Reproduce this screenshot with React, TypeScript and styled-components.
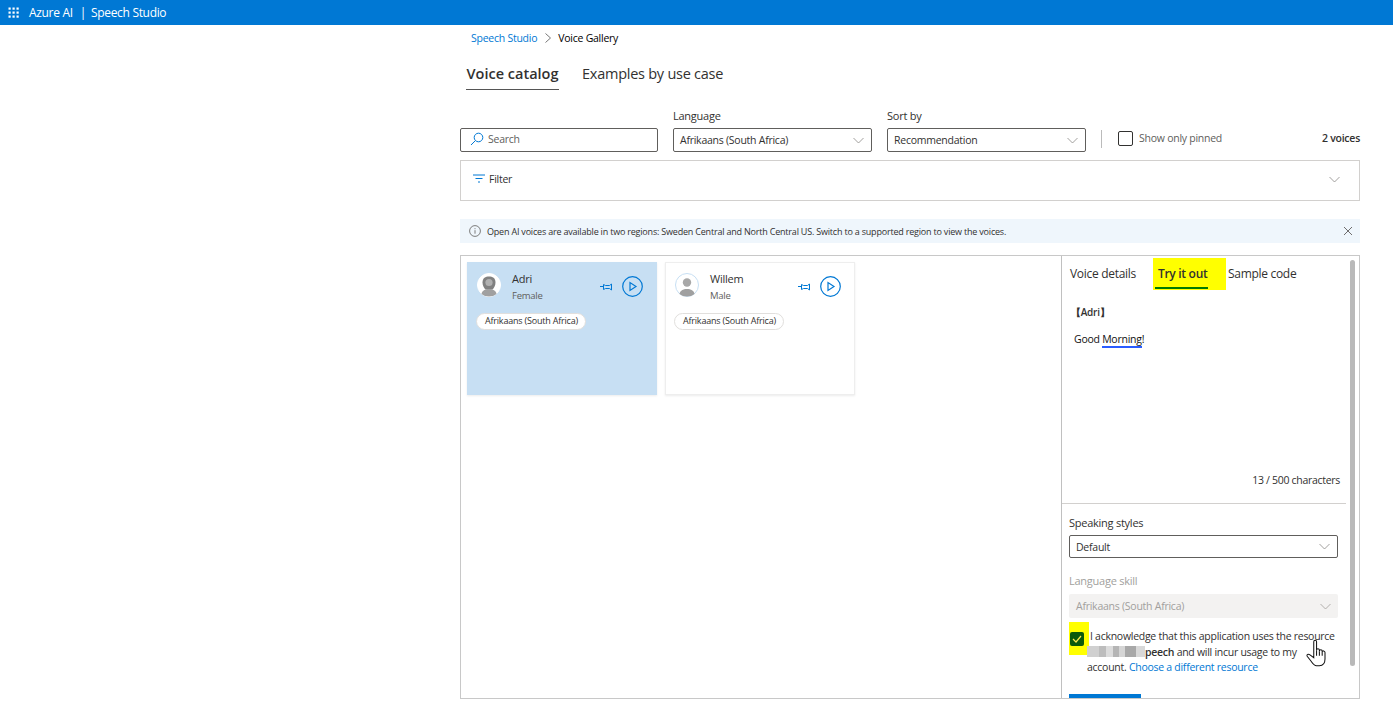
import React from "react";
import styled, { createGlobalStyle } from "styled-components";

const Global = createGlobalStyle`
  html, body { margin: 0; padding: 0; background: #fff; height: 705px; overflow: hidden; }
  body { font-family: "Open Sans", "Noto Sans", "Liberation Sans", sans-serif; color: #323130; font-size: 11px; letter-spacing: -0.25px; }
  * { box-sizing: border-box; }
`;

const TopBar = styled.header`
  height: 25px; background: #0078d4; color: #fff; display: flex; align-items: center; padding-left: 8px;
  font-size: 12px; letter-spacing: -0.32px;
`;
const Waffle = styled.svg`width: 12px; height: 12px; margin-right: 9px; fill: #fff;`;
const BarSep = styled.span`margin: 0 5px 0 7px;`;

const Page = styled.main`width: 900px; margin-left: 460px; display: flex; flex-direction: column;`;

const Crumbs = styled.nav`height: 26px; display: flex; align-items: center; padding-left: 11px; font-size: 10.5px; color: #000;`;
const CrumbLink = styled.span`color: #0078d4;`;
const CrumbArrow = styled.svg`width: 8px; height: 10px; margin: 0 6px 0 7px; stroke: #777; fill: none;`;

const MainTabs = styled.div`display: flex; height: 39px; margin-left: 6px; gap: 23px; font-size: 14.5px; letter-spacing: 0;`;
const MainTab = styled.div<{ $on?: boolean }>`
  height: 39px; line-height: 45px; width: ${p => (p.$on ? "93px" : "auto")};
  font-weight: ${p => (p.$on ? 600 : 400)}; text-align: center; letter-spacing: ${p => (p.$on ? "0" : "-0.25px")};
  color: #323130; border-bottom: ${p => (p.$on ? "1px solid #555" : "none")};
`;

const Controls = styled.div`display: flex; align-items: flex-end; margin-top: 19px; height: 43px;`;
const Field = styled.div<{ $w: number; $ml?: number }>`width: ${p => p.$w}px; margin-left: ${p => p.$ml ?? 0}px; display: flex; flex-direction: column;`;
const Label = styled.div<{ $off?: boolean }>`font-size: 11px; font-weight: 500; height: 19px; color: ${p => (p.$off ? "#a19f9d" : "#323130")}; line-height: 13px;`;
const Box = styled.div<{ $off?: boolean }>`
  height: 24px; border: ${p => (p.$off ? "none" : "1px solid #605e5c")}; border-radius: 2px; display: flex; align-items: center;
  padding: 0 7px 0 ${p => (p.$off ? 7 : 6)}px; font-size: 10.5px; background: ${p => (p.$off ? "#f3f2f1" : "#fff")}; color: ${p => (p.$off ? "#a19f9d" : "#323130")};
  justify-content: space-between;
`;
const SearchBox = styled(Box)`justify-content: flex-start; gap: 4px; padding-left: 9px; padding-bottom: 2px; color: #605e5c;`;
const Vline = styled.div`width: 1px; height: 18px; background: #bbb; margin: 0 16px 4px 15px;`;
const Pinned = styled.div`display: flex; align-items: center; gap: 6px; height: 24px; margin-bottom: 2px; font-size: 10.5px; color: #605e5c; flex: 1;`;
const CheckEmpty = styled.div`width: 15px; height: 15px; border: 1px solid #323130; border-radius: 2px;`;
const Count = styled.div`height: 24px; line-height: 21px; font-size: 10.5px; font-weight: 600; color: #323130;`;

const FilterBox = styled.div`
  margin-top: 8px; height: 41px; border: 1px solid #d2d0ce; display: flex; align-items: center; justify-content: space-between;
  padding: 0 19px 3px 12px; font-size: 10.5px; color: #323130;
`;
const FilterLabel = styled.div`display: flex; align-items: center; gap: 3px;`;

const Notice = styled.div`
  margin-top: 18px; height: 24px; background: #eff6fc; display: flex; align-items: center; padding: 0 7px 0 9px; font-size: 9px; color: #323130; letter-spacing: -0.2px;
`;
const NoticeText = styled.span`flex: 1; margin-left: 6px;`;

const Panel = styled.section`
  margin-top: 12px; height: 444px; border: 1px solid #c8c8c8; display: flex; overflow: hidden;
`;
const CardArea = styled.div`width: 600px; padding: 6px 6px; display: flex; gap: 8px; align-items: flex-start;`;
const Card = styled.article<{ $on?: boolean }>`
  width: 190px; height: 133px; padding: 10px 13px 10px 9px; background: ${p => (p.$on ? "#c7dff3" : "#fff")};
  border: 1px solid ${p => (p.$on ? "#c7dff3" : "#eeeeee")}; box-shadow: 0 1px 2px rgba(0,0,0,.08);
  display: flex; flex-direction: column;
`;
const CardTop = styled.div`display: flex; align-items: flex-start;`;
const Avatar = styled.svg`width: 24px; height: 24px; flex: none;`;
const Who = styled.div`margin-left: 11px; flex: 1; margin-top: -2px;`;
const Name = styled.div`font-size: 11px; font-weight: 500; line-height: 15px; color: #323130;`;
const Sub = styled.div`font-size: 9.5px; line-height: 14px; margin-top: 3px; color: #605e5c;`;
const PinIcon = styled.svg`width: 12px; height: 9px; margin-top: 9px; stroke: #0078d4; fill: none;`;
const PlayIcon = styled.svg`width: 21px; height: 21px; margin-left: 10px; margin-top: 3px; stroke: #0078d4; fill: none;`;
const Chip = styled.div`
  align-self: flex-start; margin-top: 10px; margin-left: -1px; height: 17px; padding: 0 7px 0 8px; border-radius: 9px; background: #fff;
  border: 1px solid #e1dfdd; line-height: 14px; font-size: 9px; letter-spacing: -0.2px; color: #323130;
`;

const Side = styled.aside`flex: 1; border-left: 1px solid #c0c0c0; position: relative; display: flex; flex-direction: column; overflow: hidden;`;
const Scroll = styled.div`position: absolute; left: 288px; top: 4px; width: 5px; height: 406px; background: #b9b9b9; border-radius: 3px;`;
const SideTabs = styled.div`display: flex; flex: none; height: 35px; padding-left: 8px; font-size: 12px; letter-spacing: -0.3px;`;
const SideTab = styled.div<{ $on?: boolean; $w: number; $pl: number }>`
  width: ${p => p.$w}px; padding: 8px 0 0 ${p => p.$pl}px; margin-top: 2px; line-height: 16px; height: 32px;
  background: ${p => (p.$on ? "#ffff00" : "transparent")}; font-weight: ${p => (p.$on ? 600 : 400)};
  color: #323130; position: relative;
`;
const TabLine = styled.div`position: absolute; left: 2px; top: 29px; width: 53px; height: 2px; background: #007a00;`;
const Editor = styled.div`flex: none; height: 213px; padding: 13px 0 0 12px; position: relative; border-bottom: 1px solid #d2d0ce; margin-right: 13px;`;
const Speaker = styled.div`font-size: 10px; font-weight: 600; line-height: 16px; color: #323130; margin-left: -3px;`;
const Phrase = styled.div`font-size: 10.5px; line-height: 16px; margin-top: 11px; color: #111;`;
const Wavy = styled.span`border-bottom: 2px solid #2b5cff;`;
const Chars = styled.div`position: absolute; right: 6px; bottom: 16px; font-size: 10.5px; letter-spacing: -0.3px; color: #323130;`;
const Form = styled.div`flex: none; padding: 11px 21px 0 7px; display: flex; flex-direction: column;`;
const FormLabel = styled(Label)`height: 20px; line-height: 15px;`;
const FormBox = styled(Box)`height: 23px; margin-bottom: 15px;`;
const FormBoxOff = styled(FormBox)`height: 24px; margin-top: 1px; margin-bottom: 4px;`;
const Ack = styled.div`display: flex; align-items: flex-start; position: relative; height: 68px;`;
const Mark = styled.div`width: 20px; height: 33px; background: #ffff00; display: flex; align-items: center; justify-content: flex-start; padding-left: 1px; flex: none;`;
const MarkBox = styled.div`width: 14px; height: 14px; background: #0b5a0b; border-radius: 2px; display: flex; align-items: center; justify-content: center;`;
const AckText = styled.div`font-size: 10.5px; line-height: 15.5px; color: #323130; margin-left: -2px; padding-top: 7px; letter-spacing: -0.27px; white-space: nowrap;`;
const Indent = styled.span`padding-left: 3px;`;
const Blurred = styled.span`
  display: inline-block; width: 58px; height: 11px; vertical-align: -1px;
  background: linear-gradient(90deg,#d0d0d0 0 20%,#bdbdbd 20% 33%,#dcdcdc 33% 45%,#b5b5b5 45% 55%,#d5d5d5 55% 65%,#a8a8a8 65% 85%,#d8d8d8 85%);
`;
const Bold = styled.b`font-weight: 600;`;
const Link = styled.span`color: #0078d4;`;
const Hand = styled.svg`position: absolute; left: 236px; top: 16px; width: 25px; height: 30px;`;
const Gen = styled.div`width: 72px; height: 24px; background: #0078d4; margin-top: 4px;`;

const Chevron = ({ c = "#8a8886" }: { c?: string }) => (
  <svg width="11" height="7" viewBox="0 0 11 7" fill="none" stroke={c} strokeWidth="0.8"><path d="M.5 1l5 5 5-5" /></svg>
);

const Person = ({ f }: { f?: boolean }) => (
  <Avatar viewBox="0 0 24 24">
    <circle cx="12" cy="12" r="11.500" fill="#fff" stroke={f ? "#fff" : "#c7dff3"} />
    {f && <path d="M5.500 9.500C5.500 5 8.500 3.500 12 3.500s6.500 1.500 6.500 6c0 3-1.500 5.500-3 7H8.500c-1.500-1.500-3-4-3-7z" fill="#808080" />}
    <circle cx="12" cy="9.500" r={f ? 3.600 : 4.200} fill={f ? "#b0b0b0" : "#a8a8a8"} />
    <path d="M4.500 21c.5-3.500 3.500-5 7.500-5s7 1.500 7.500 5c-2 1.700-4.700 2.500-7.500 2.500S6.500 22.700 4.500 21z" fill="#a0a0a0" />
  </Avatar>
);

const Pin = () => (
  <PinIcon viewBox="0 0 12 9"><path d="M0 4.500h3.500M3.500 2.500l2 1h4l2-1.500v6l-2-1.500h-4l-2 1z" strokeWidth="1" /></PinIcon>
);
const Play = () => (
  <PlayIcon viewBox="0 0 21 21"><circle cx="10.500" cy="10.500" r="9.800" strokeWidth="1.200" /><path d="M8 6.500v8l6-4z" strokeWidth="1.200" /></PlayIcon>
);

const VoiceCard = ({ name, sub, on }: { name: string; sub: string; on?: boolean }) => (
  <Card $on={on}>
    <CardTop>
      <Person f={on} />
      <Who><Name>{name}</Name><Sub>{sub}</Sub></Who>
      <Pin />
      <Play />
    </CardTop>
    <Chip>Afrikaans (South Africa)</Chip>
  </Card>
);

export default function App() {
  return (
    <>
      <Global />
      <TopBar>
        <Waffle viewBox="0 0 12 12">
          {[1, 5, 9].flatMap(y => [1, 5, 9].map(x => <rect key={`${x}-${y}`} x={x - 0.5} y={y - 0.5} width="2.200" height="2.200" />))}
        </Waffle>
        Azure AI<BarSep>|</BarSep>Speech Studio
      </TopBar>
      <Page>
        <Crumbs>
          <CrumbLink>Speech Studio</CrumbLink>
          <CrumbArrow viewBox="0 0 8 10"><path d="M1.500.5l5 4.500-5 4.500" /></CrumbArrow>
          Voice Gallery
        </Crumbs>
        <MainTabs>
          <MainTab $on>Voice catalog</MainTab>
          <MainTab>Examples by use case</MainTab>
        </MainTabs>
        <Controls>
          <Field $w={198}>
            <SearchBox>
              <svg width="14" height="14" viewBox="0 0 14 14" fill="none" stroke="#0078d4" strokeWidth="1"><circle cx="8.500" cy="5.500" r="4.300" /><path d="M5.300 8.700L1 13" /></svg>
              Search
            </SearchBox>
          </Field>
          <Field $w={199} $ml={15}>
            <Label>Language</Label>
            <Box>Afrikaans (South Africa)<Chevron /></Box>
          </Field>
          <Field $w={199} $ml={15}>
            <Label>Sort by</Label>
            <Box>Recommendation<Chevron /></Box>
          </Field>
          <Vline />
          <Pinned><CheckEmpty />Show only pinned</Pinned>
          <Count>2 voices</Count>
        </Controls>
        <FilterBox>
          <FilterLabel>
            <svg width="13" height="10" viewBox="0 0 13 10" fill="none" stroke="#0078d4" strokeWidth="1"><path d="M0 1h12M2.500 4.500h7M5 8h2" /></svg>
            Filter
          </FilterLabel>
          <Chevron />
        </FilterBox>
        <Notice>
          <svg width="12" height="12" viewBox="0 0 12 12" fill="none" stroke="#605e5c" strokeWidth=".8"><circle cx="6" cy="6" r="5.400" /><path d="M6 5.200v3.500M6 3.200v1" /></svg>
          <NoticeText>Open AI voices are available in two regions: Sweden Central and North Central US. Switch to a supported region to view the voices.</NoticeText>
          <svg width="10" height="10" viewBox="0 0 10 10" fill="none" stroke="#605e5c" strokeWidth=".9"><path d="M1 1l8 8M9 1l-8 8" /></svg>
        </Notice>
        <Panel>
          <CardArea>
            <VoiceCard name="Adri" sub="Female" on />
            <VoiceCard name="Willem" sub="Male" />
          </CardArea>
          <Side>
            <Scroll />
            <SideTabs>
              <SideTab $w={83} $pl={0}>Voice details</SideTab>
              <SideTab $on $w={73} $pl={5}>Try it out<TabLine /></SideTab>
              <SideTab $w={100} $pl={2}>Sample code</SideTab>
            </SideTabs>
            <Editor>
              <Speaker>【Adri】</Speaker>
              <Phrase>Good <Wavy>Morning</Wavy>!</Phrase>
              <Chars>13 / 500 characters</Chars>
            </Editor>
            <Form>
              <FormLabel>Speaking styles</FormLabel>
              <FormBox>Default<Chevron /></FormBox>
              <FormLabel $off>Language skill</FormLabel>
              <FormBoxOff $off>Afrikaans (South Africa)<Chevron c="#a19f9d" /></FormBoxOff>
              <Ack>
                <Mark>
                  <MarkBox>
                    <svg width="10" height="8" viewBox="0 0 10 8" fill="none" stroke="#ffe94d" strokeWidth="1.200"><path d="M1 4l3 3 5-6" /></svg>
                  </MarkBox>
                </Mark>
                <AckText>
                  <Indent>I acknowledge that this application uses the resource</Indent><br />
                  <Blurred /><Bold>peech</Bold> and will incur usage to my<br />
                  account. <Link>Choose a different resource</Link>
                </AckText>
                <Hand viewBox="0 0 26 32" fill="#fff" stroke="#111" strokeWidth="1.100">
                  <path d="M9 4c0-2 3-2 3 0v9c0-2 3-2 3 0v1c0-2 3-2 3 0v1c0-2 3-1.500 3 .5v7c0 4-2 7-6 7h-3c-3 0-4-2-6-5l-4-5c-1-2 1-3 3-1.500l4 3V4z" />
                  <path d="M12 13v6M15 14v5M18 15v4" />
                </Hand>
              </Ack>
              <Gen />
            </Form>
          </Side>
        </Panel>
      </Page>
    </>
  );
}
